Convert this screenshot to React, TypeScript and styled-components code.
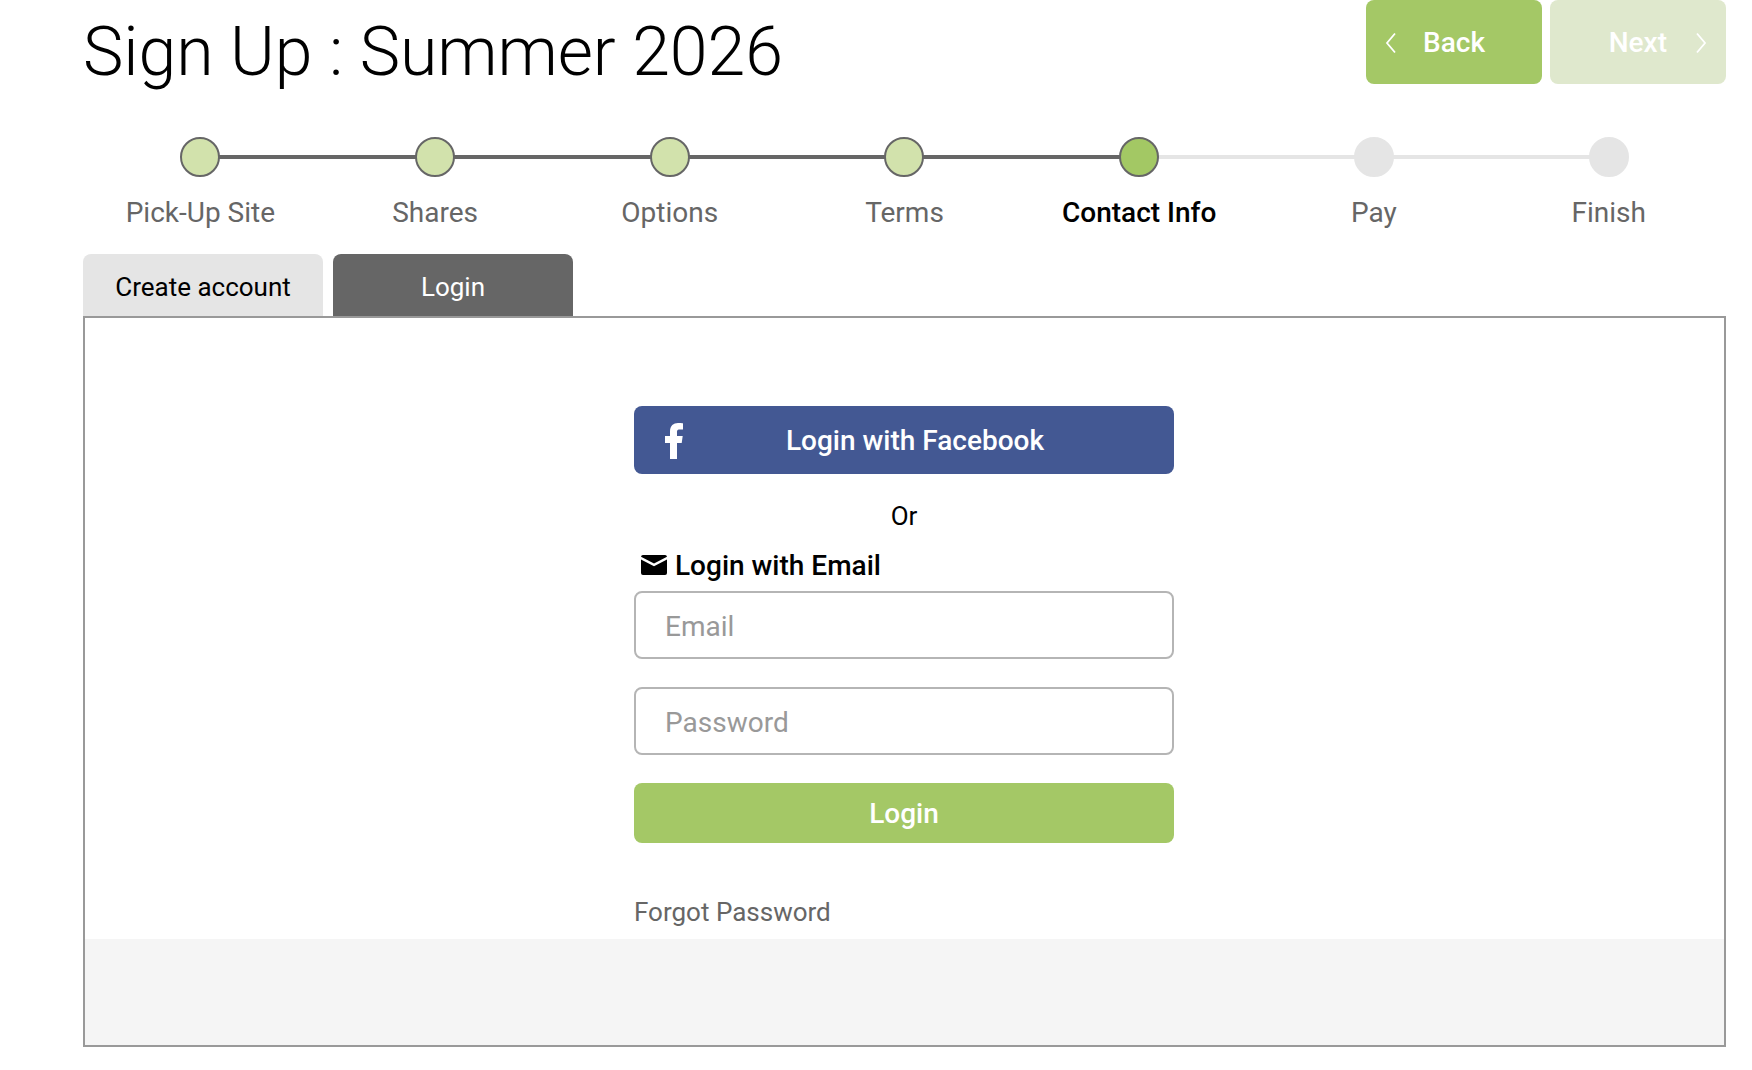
import styled, { createGlobalStyle } from "styled-components";

const STEPS = ["Pick-Up Site", "Shares", "Options", "Terms", "Contact Info", "Pay", "Finish"];
const CURRENT = 4;

type StepState = "done" | "current" | "todo";

const stateOf = (i: number): StepState =>
  i < CURRENT ? "done" : i === CURRENT ? "current" : "todo";

const dotColors = {
  done: "background: #d2e2ac; border-color: #666666;",
  current: "background: #a3c864; border-color: #666666;",
  todo: "background: #e5e5e5; border-color: #e5e5e5;",
};

const App = () => {
  return (
    <Page>
      <GlobalStyle />
      <Header>
        <Title>Sign Up : Summer 2026</Title>
        <NavButtons>
          <NavButton>
            <Chevron width="12" height="22" viewBox="0 0 12 22">
              <path d="M10 1.500 2 11l8 9.500" />
            </Chevron>
            <NavLabel>Back</NavLabel>
          </NavButton>
          <NavButton $disabled $reverse>
            <Chevron width="12" height="22" viewBox="0 0 12 22">
              <path d="m2 1.500 8 9.500-8 9.500" />
            </Chevron>
            <NavLabel>Next</NavLabel>
          </NavButton>
        </NavButtons>
      </Header>

      <Stepper>
        {STEPS.map((step, i) => (
          <Step key={step}>
            {i < STEPS.length - 1 && <Connector $active={i < CURRENT} />}
            <Dot $state={stateOf(i)} />
            <StepLabel $current={i === CURRENT}>{step}</StepLabel>
          </Step>
        ))}
      </Stepper>

      <Tabs>
        <Tab>Create account</Tab>
        <Tab $active>Login</Tab>
      </Tabs>

      <Panel>
        <PanelBody>
          <LoginColumn>
            <FacebookButton>
              <FacebookIcon width="18" height="36" viewBox="0 0 18 36">
                <path d="M5 36V20H0v-7h5V8.500C5 2.800 8.500 0 13 0c2 0 4 .2 5 .3v6.200h-3.400C12 6.500 12 8 12 9.500V13h5.700l-1 7H12v16Z" />
              </FacebookIcon>
              Login with Facebook
            </FacebookButton>
            <OrText>Or</OrText>
            <EmailHeading>
              <EnvelopeIcon width="26" height="20" viewBox="0 0 26 20">
                <path d="M2 0h22a2 2 0 0 1 2 1.800L13 8.400 0 1.800A2 2 0 0 1 2 0Z" />
                <path d="M0 4.600 13 11.200 26 4.600V18a2 2 0 0 1-2 2H2a2 2 0 0 1-2-2Z" />
              </EnvelopeIcon>
              Login with Email
            </EmailHeading>
            <Field type="email" placeholder="Email" />
            <Field type="password" placeholder="Password" />
            <LoginButton>Login</LoginButton>
            <ForgotLink>Forgot Password</ForgotLink>
          </LoginColumn>
        </PanelBody>
        <PanelFooter />
      </Panel>
    </Page>
  );
};

export default App;

const GlobalStyle = createGlobalStyle`
  html, body {
    margin: 0;
    padding: 0;
    background: #ffffff;
  }
  body {
    font-family: Roboto, "Liberation Sans", sans-serif;
    -webkit-font-smoothing: antialiased;
  }
  * {
    box-sizing: border-box;
  }
`;

const Page = styled.div`
  width: 1726px;
  padding-left: 83px;
  display: flex;
  flex-direction: column;
`;

const Header = styled.header`
  height: 137px;
  display: flex;
  justify-content: space-between;
  align-items: flex-start;
`;

const Title = styled.h1`
  margin: 0;
  padding-top: 12px;
  font-size: 68px;
  letter-spacing: -0.05px;
  line-height: 80px;
  font-weight: 300;
  color: #000000;
`;

const NavButtons = styled.div`
  display: flex;
  gap: 8px;
`;

const NavButton = styled.button<{ $disabled?: boolean; $reverse?: boolean }>`
  width: 176px;
  height: 84px;
  border: none;
  border-radius: 8px;
  padding: 0 19px;
  display: flex;
  flex-direction: ${({ $reverse }) => ($reverse ? "row-reverse" : "row")};
  align-items: center;
  gap: ${({ $reverse }) => ($reverse ? "28px" : "26px")};
  background: ${({ $disabled }) => ($disabled ? "#dfe8cd" : "#a4c866")};
  color: #ffffff;
  font-family: inherit;
`;

const Chevron = styled.svg`
  flex: none;
  margin-top: 1px;
  fill: none;
  stroke: #ffffff;
  stroke-width: 1.8;
`;

const NavLabel = styled.span`
  padding-top: 2px;
  font-size: 28px;
  font-weight: 500;
  line-height: 1;
`;

const Stepper = styled.ol`
  list-style: none;
  margin: 0;
  padding: 0;
  display: grid;
  grid-template-columns: repeat(7, 1fr);
`;

const Step = styled.li`
  position: relative;
  display: flex;
  flex-direction: column;
  align-items: center;
`;

const Connector = styled.span<{ $active: boolean }>`
  position: absolute;
  top: 18px;
  left: 50%;
  width: 100%;
  height: 4px;
  background: ${({ $active }) => ($active ? "#666666" : "#e5e5e5")};
`;

const Dot = styled.span<{ $state: StepState }>`
  position: relative;
  width: 40px;
  height: 40px;
  border-radius: 50%;
  border: 2px solid;
  ${({ $state }) => dotColors[$state]}
`;

const StepLabel = styled.span<{ $current: boolean }>`
  margin-top: 19px;
  font-size: 28px;
  line-height: 33px;
  font-weight: ${({ $current }) => ($current ? 500 : 400)};
  color: ${({ $current }) => ($current ? "#000000" : "#666666")};
`;

const Tabs = styled.div`
  margin-top: 25px;
  display: flex;
  gap: 10px;
`;

const Tab = styled.div<{ $active?: boolean }>`
  width: 240px;
  height: 62px;
  padding-top: 4px;
  border-radius: 8px 8px 0 0;
  display: flex;
  align-items: center;
  justify-content: center;
  font-size: 26px;
  background: ${({ $active }) => ($active ? "#666666" : "#e5e5e5")};
  color: ${({ $active }) => ($active ? "#ffffff" : "#000000")};
`;

const Panel = styled.section`
  height: 731px;
  border: 2px solid #999999;
  display: flex;
  flex-direction: column;
`;

const PanelBody = styled.div`
  flex: 1;
  padding-top: 88px;
  padding-left: 549px;
`;

const PanelFooter = styled.div`
  height: 106px;
  background: #f5f5f5;
`;

const LoginColumn = styled.div`
  width: 540px;
  display: flex;
  flex-direction: column;
`;

const FacebookButton = styled.button`
  position: relative;
  height: 68px;
  border: none;
  border-radius: 8px;
  padding-left: 28px;
  background: #435893;
  color: #ffffff;
  font-family: inherit;
  font-size: 28px;
  font-weight: 500;
`;

const FacebookIcon = styled.svg`
  position: absolute;
  left: 31px;
  top: 17px;
  fill: #ffffff;
`;

const OrText = styled.div`
  margin-top: 27px;
  text-align: center;
  font-size: 26px;
  line-height: 30px;
  color: #000000;
`;

const EmailHeading = styled.div`
  margin-top: 18px;
  margin-bottom: 8px;
  padding-left: 7px;
  display: flex;
  align-items: center;
  gap: 8px;
  font-size: 28px;
  font-weight: 500;
  line-height: 34px;
  color: #000000;
`;

const EnvelopeIcon = styled.svg`
  flex: none;
  margin-top: -3px;
`;

const Field = styled.input`
  width: 100%;
  height: 68px;
  margin: 0 0 28px;
  padding: 2px 29px 0;
  border: 2px solid #b5b5b5;
  border-radius: 8px;
  background: #ffffff;
  font-family: inherit;
  font-size: 28px;
  outline: none;

  &::placeholder {
    color: #999999;
    opacity: 1;
  }
`;

const LoginButton = styled.button`
  height: 60px;
  border: none;
  border-radius: 8px;
  background: #a4c866;
  color: #ffffff;
  font-family: inherit;
  font-size: 28px;
  font-weight: 500;
`;

const ForgotLink = styled.a`
  margin-top: 54px;
  font-size: 26px;
  line-height: 30px;
  color: #666666;
`;
